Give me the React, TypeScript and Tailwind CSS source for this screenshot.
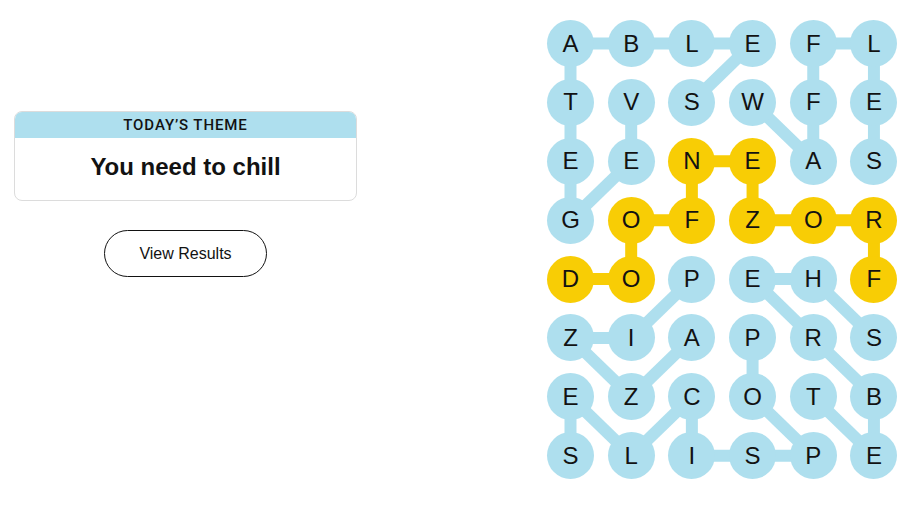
import React from 'react';

const BLUE = '#aedfee';
const YELLOW = '#f8cd05';

const letters = [
  'ABLEFL',
  'TVSWFE',
  'EENEAS',
  'GOFZOR',
  'DOPEHF',
  'ZIAPRS',
  'EZCOTB',
  'SLISPE',
];

// cells that belong to the spangram
const spangram = new Set(['2,2', '2,3', '3,1', '3,2', '3,3', '3,4', '3,5', '4,0', '4,1', '4,5']);

type Edge = [number, number, number, number];

const blueEdges: Edge[] = [
  // vegetables
  [0, 0, 0, 1], [0, 1, 0, 2], [0, 2, 0, 3], [0, 3, 1, 2],
  [0, 0, 1, 0], [1, 0, 2, 0], [2, 0, 3, 0], [3, 0, 2, 1], [2, 1, 1, 1],
  // waffles
  [0, 4, 0, 5], [0, 4, 1, 4], [1, 4, 2, 4], [2, 4, 1, 3], [0, 5, 1, 5], [1, 5, 2, 5],
  // pizza
  [4, 2, 5, 1], [5, 1, 5, 0], [5, 0, 6, 1], [6, 1, 5, 2],
  // sherbet
  [4, 3, 4, 4], [4, 3, 5, 4], [5, 4, 6, 5], [6, 5, 7, 5], [7, 5, 6, 4], [4, 4, 5, 5],
  // popsicles
  [6, 0, 7, 0], [6, 0, 7, 1], [7, 1, 6, 2], [6, 2, 7, 2], [7, 2, 7, 3], [7, 3, 7, 4],
  [7, 4, 6, 3], [6, 3, 5, 3],
];

const yellowEdges: Edge[] = [
  [2, 2, 2, 3], [2, 2, 3, 2], [3, 2, 3, 1], [3, 1, 4, 1], [4, 1, 4, 0],
  [2, 3, 3, 3], [3, 3, 3, 4], [3, 4, 3, 5], [3, 5, 4, 5],
];

const cx = (c: number) => 23.5 + c * 60.7;
const cy = (r: number) => 23.5 + r * 58.9;

function Board() {
  return (
    <div className="relative">
      <svg className="absolute inset-0 w-full h-full pointer-events-none" viewBox="0 0 350.5 459.3">
        {blueEdges.map(([r1, c1, r2, c2], i) => (
          <line key={`b${i}`} x1={cx(c1)} y1={cy(r1)} x2={cx(c2)} y2={cy(r2)} stroke={BLUE} strokeWidth={12} />
        ))}
        {yellowEdges.map(([r1, c1, r2, c2], i) => (
          <line key={`y${i}`} x1={cx(c1)} y1={cy(r1)} x2={cx(c2)} y2={cy(r2)} stroke={YELLOW} strokeWidth={12} />
        ))}
      </svg>
      <div className="relative grid grid-cols-[repeat(6,47px)] gap-x-[13.7px] gap-y-[11.9px]">
        {letters.map((row, r) =>
          row.split('').map((ch, c) => (
            <div
              key={`${r}-${c}`}
              className={`w-[47px] h-[47px] rounded-full flex items-center justify-center text-[24px] text-[#121212] leading-none ${
                spangram.has(`${r},${c}`) ? 'bg-[#f8cd05]' : 'bg-[#aedfee]'
              }`}
            >
              {ch}
            </div>
          ))
        )}
      </div>
    </div>
  );
}

export default function App() {
  return (
    <div className="w-[914px] h-[514px] bg-white flex font-['Liberation_Sans',Arial,sans-serif] text-[#121212]">
      {/* Theme + results */}
      <div className="ml-[14px] pt-[111px] w-[343px] flex flex-col items-center">
        <div className="w-full rounded-lg border border-[#dcdcdc] overflow-hidden">
          <div className="h-[26px] bg-[#aedfee] flex items-center justify-center font-['Roboto',sans-serif] text-[15px] font-medium tracking-[0.06em]">
            TODAY’S THEME
          </div>
          <div className="h-[62px] pb-[5px] flex items-center justify-center text-[24px] font-bold">
            You need to chill
          </div>
        </div>
        <button className="mt-[29px] w-[163px] h-[47px] rounded-full border border-[#121212] text-[16px] bg-white">
          View Results
        </button>
      </div>

      {/* Board */}
      <div className="ml-[190px] pt-[20px]">
        <Board />
      </div>
    </div>
  );
}
